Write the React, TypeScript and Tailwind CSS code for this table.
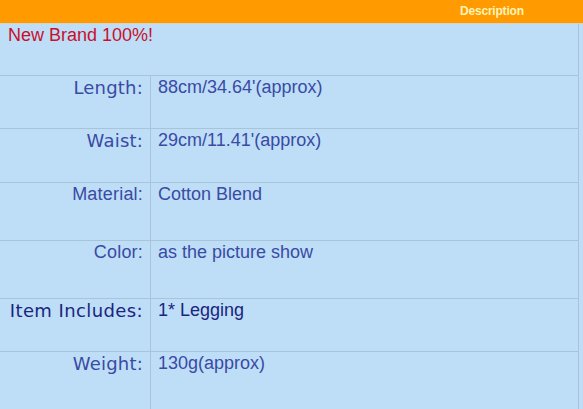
const rows = [
  { label: "Length:", value: "88cm/34.64'(approx)", h: "h-[53px]", lf: "verdana" },
  { label: "Waist:", value: "29cm/11.41'(approx)", h: "h-[54px]", lf: "verdana" },
  { label: "Material:", value: "Cotton Blend", h: "h-[58px]", lf: "arial" },
  { label: "Color:", value: "as the picture show", h: "h-[58px]", lf: "arial" },
  { label: "Item Includes:", value: "1* Legging", h: "h-[53px]", lf: "verdana" },
  { label: "Weight:", value: "130g(approx)", h: "h-[58px]", lf: "verdana" },
];

export default function App() {
  return (
    <div className="w-[583px] h-[409px] overflow-hidden bg-[#bddef6] font-['Liberation_Sans',Arial,sans-serif]">
      {/* header bar */}
      <div className="h-[24px] bg-[#ff9a00] border-b border-[#d9d2c4] flex items-center pl-[460px] pb-[1px]">
        <span className="text-[12px] font-bold text-[#fff3b8] tracking-[-0.2px]">Description</span>
      </div>

      <div className="w-[579px] border-r border-[#a9c3d8]">
        <div className="h-[52px] border-b border-[#a9c3d8] pl-[8px] pt-[1px] text-[18px] leading-[20px] text-[#c8102e]">
          New Brand 100%!
        </div>

        {rows.map((r) => {
          const dark = r.label === "Item Includes:";
          return (
            <div key={r.label} className={`grid grid-cols-[151px_1fr] border-b border-[#a9c3d8] ${r.h}`}>
              <div
                className={`border-r border-[#a9c3d8] text-right pr-[7px] whitespace-nowrap ${
                  dark ? "text-[#1b2580] tracking-[0.4px]" : "text-[#3a4aa5] tracking-[0.2px]"
                } ${
                  r.lf === "verdana"
                    ? "font-['DejaVu_Sans',Verdana,sans-serif] text-[18px] leading-[19px] pt-[2px]"
                    : "text-[18px] leading-[20px] pt-[1px]"
                }`}
              >
                {r.label}
              </div>
              <div
                className={`pl-[7px] pt-[1px] text-[18px] leading-[20px] ${
                  dark ? "text-[#1b2580]" : "text-[#3a4aa5]"
                }`}
              >
                {r.value}
              </div>
            </div>
          );
        })}
      </div>
    </div>
  );
}
